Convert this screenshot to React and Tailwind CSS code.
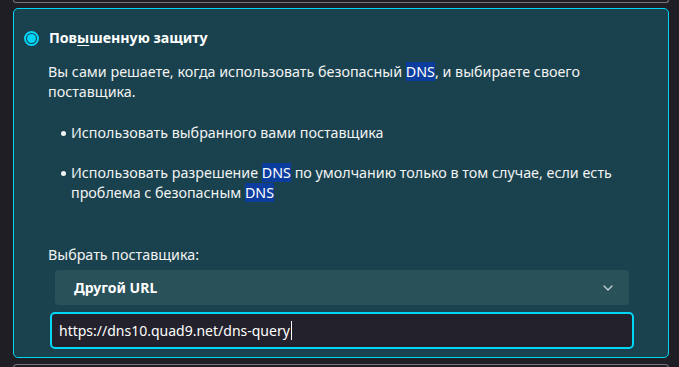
import React from "react";

function Radio() {
  return (
    <span className="flex h-[15px] w-[15px] items-center justify-center rounded-full border-[2px] border-[#00d6f7]">
      <span className="h-[9px] w-[9px] rounded-full bg-[#00d6f7]" />
    </span>
  );
}

function Dns() {
  return <span className="bg-[#0b3d9f] text-white">DNS</span>;
}

function Bullet() {
  return (
    <span className="flex h-[20px] w-[5px] shrink-0 items-center">
      <span className="h-[5px] w-[5px] rounded-full bg-[#f3f3f3]" />
    </span>
  );
}

export default function App() {
  return (
    <div
      className="h-[367px] w-[679px] overflow-hidden bg-[#1f1e24] text-[#f3f3f3]"
      style={{ fontFamily: '"Noto Sans", "Open Sans", sans-serif' }}
    >
      <div className="ml-[13px] w-[656px]">
        {/* previous card edge */}
        <div className="h-[3px] rounded-b-[4px] border-x border-b border-[#77767c]" />

        {/* secure DNS card */}
        <div className="mt-[5px] h-[350px] rounded-[5px] border border-[#00d7f5] bg-[#19424e]">
          <div className="flex h-[20px] items-center gap-[10px] pl-[10px] mt-[19px]">
            <Radio />
            <span className="text-[14.2px] font-bold text-white">
              Пов<span className="underline underline-offset-2">ы</span>шенную защиту
            </span>
          </div>

          <div className="pl-[34px] pr-[20px]">
            <p className="mt-[14px] text-[14.3px] leading-[20px]">
              Вы сами решаете, когда использовать безопасный <Dns />, и выбираете своего
              <br />
              поставщика.
            </p>

            <ul className="mt-[21px] pl-[13px] text-[14.3px] leading-[20px]">
              <li className="flex gap-[5px]">
                <Bullet />
                <span>Использовать выбранного вами поставщика</span>
              </li>
              <li className="mt-[20px] flex gap-[5px]">
                <Bullet />
                <span>
                  Использовать разрешение <Dns /> по умолчанию только в том случае, если есть
                  <br />
                  проблема с безопасным <Dns />
                </span>
              </li>
            </ul>

            <p className="mt-[42px] text-[14.3px] leading-[20px]">Выбрать поставщика:</p>
          </div>

          <div className="ml-[41px] mt-[5px] flex h-[35px] w-[574px] items-center justify-between rounded-[4px] bg-[#28515a] pl-[19px] pr-[16px]">
            <span className="text-[14px] font-bold text-white">Другой URL</span>
            <svg width="10" height="6" viewBox="0 0 10 6" fill="none">
              <path d="M1 1l4 4 4-4" stroke="#c9d3d6" strokeWidth="1.3" strokeLinecap="round" strokeLinejoin="round" />
            </svg>
          </div>

          <div className="ml-[36px] mt-[7px] flex h-[37px] w-[584px] items-center rounded-[5px] border-[2px] border-[#00d7f5] bg-[#23212b] pl-[7px]">
            <span className="text-[14px] text-white">https://dns10.quad9.net/dns-query</span>
            <span className="ml-px h-[19px] w-px bg-white" />
          </div>
        </div>

        {/* next card edge */}
        <div className="mt-[6px] h-[10px] rounded-t-[4px] border-x border-t border-[#77767c]" />
      </div>
    </div>
  );
}
